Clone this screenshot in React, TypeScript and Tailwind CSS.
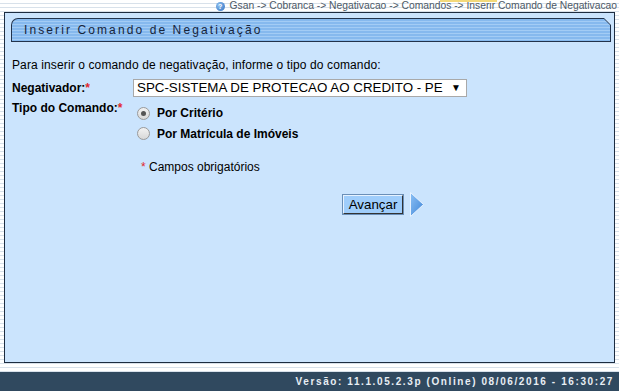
import React from "react";

function Radio({ checked }: { checked?: boolean }) {
  return (
    <span className="relative inline-flex h-[13px] w-[13px] items-center justify-center rounded-full border border-[#9a9a9a] bg-[linear-gradient(to_bottom,#f2f2f2,#d8d8d8)]">
      {checked && <span className="h-[5px] w-[5px] rounded-full bg-[#555]" />}
    </span>
  );
}

export default function App() {
  return (
    <div className="relative flex h-[391px] w-[619px] flex-col overflow-hidden bg-[repeating-linear-gradient(to_bottom,#ffffff_0px,#ffffff_3px,#d8e1ea_3px,#d8e1ea_4px)] font-['Liberation_Sans',Arial,sans-serif] text-black">
      <div className="absolute left-[440px] top-0 h-[2px] w-[57px] bg-[#f3d97a]" />
      {/* breadcrumb */}
      <div className="flex h-[12px] items-center justify-end gap-[5px] pr-[2px] text-[10.3px] leading-[12px] text-[#4d5966]">
        <span className="flex h-[9px] w-[9px] items-center justify-center rounded-full bg-[radial-gradient(circle_at_35%_35%,#8fc0f0,#2f6fc0)] text-[7px] font-bold leading-none text-white">
          ?
        </span>
        <span>Gsan -&gt; Cobranca -&gt; Negativacao -&gt; Comandos -&gt; Inserir Comando de Negativacao</span>
      </div>

      {/* panel */}
      <div className="ml-[4px] mr-[4px] flex h-[351px] flex-col border border-[#1d2c40] bg-[#cbe4fd]">
        {/* title bar */}
        <div className="ml-[6px] mr-[3px] mt-[5px] h-[24px] rounded-tl-[7px] bg-[#22334c] p-px [clip-path:polygon(0_0,calc(100%-7px)_0,100%_7px,100%_100%,0_100%)]">
          <div className="flex h-full items-center rounded-tl-[6px] bg-[repeating-linear-gradient(to_bottom,#86b9ee_0px,#86b9ee_2px,#a3ccf5_2px,#a3ccf5_3px)] pl-[12px] text-[12px] tracking-[2.1px] text-[#16243a] [clip-path:polygon(0_0,calc(100%-6px)_0,100%_6px,100%_100%,0_100%)]">
            Inserir Comando de Negativação
          </div>
        </div>

        {/* content */}
        <div className="flex flex-col pl-[7px] text-[12px] leading-[14px]">
          <div className="mt-[16px] tracking-[0.12px]">Para inserir o comando de negativação, informe o tipo do comando:</div>

          <div className="mt-[7px] flex h-[18px] items-center">
            <div className="w-[121px] font-bold">
              Negativador:<span className="text-[#e0282d]">*</span>
            </div>
            <div className="flex h-[18px] w-[334px] items-center justify-between border border-[#a9a9a9] bg-white pl-[3px] pr-[5px] text-[13.33px]">
              <span>SPC-SISTEMA DE PROTECAO AO CREDITO - PE</span>
              <span className="text-[10px]">▼</span>
            </div>
          </div>

          <div className="mt-[4px] flex">
            <div className="w-[121px] font-bold">
              Tipo do Comando:<span className="text-[#e0282d]">*</span>
            </div>
            <div className="flex flex-col pl-[4px] pt-[2px] font-bold">
              <div className="flex h-[20px] items-center gap-[7px]">
                <Radio checked />
                <span>Por Critério</span>
              </div>
              <div className="flex h-[21px] items-center gap-[7px]">
                <Radio />
                <span>Por Matrícula de Imóveis</span>
              </div>
            </div>
          </div>

          <div className="mt-[16px] pl-[129px]">
            <span className="text-[#e0282d]">*</span> Campos obrigatórios
          </div>

          <div className="mt-[18px] flex items-center pl-[331px]">
            <div className="flex h-[19px] w-[60px] items-center justify-center border border-t-[#e6f2ff] border-l-[#e6f2ff] border-b-[#333] border-r-[#333] bg-[#9fcdfb] text-[13.33px] leading-none text-black outline outline-1 outline-[#6a8fb8]">
              Avançar
            </div>
            <svg width="14" height="25" viewBox="0 0 14 25" className="ml-[7px]">
              <defs>
                <linearGradient id="ag" x1="0" y1="0" x2="1" y2="1">
                  <stop offset="0" stopColor="#8cc0f4" />
                  <stop offset="1" stopColor="#3f86d8" />
                </linearGradient>
              </defs>
              <polygon points="0.5,0.5 13.5,12.5 0.5,24.5" fill="url(#ag)" stroke="#e8f3ff" strokeWidth="1" />
            </svg>
          </div>
        </div>
      </div>

      <div className="h-[9px]" />

      {/* footer */}
      <div className="flex h-[19px] items-center justify-end bg-[#30495f] pr-[5px] text-[10px] font-bold tracking-[1.6px] text-[#e8eef4]">
        Versão: 11.1.05.2.3p (Online) 08/06/2016 - 16:30:27
      </div>
    </div>
  );
}
